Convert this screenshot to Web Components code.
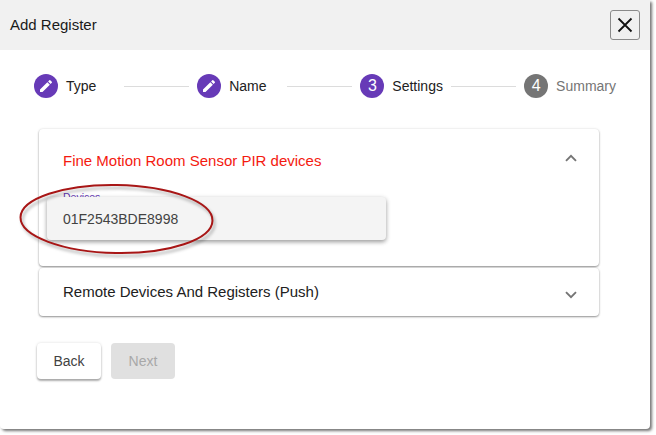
<!DOCTYPE html>
<html>
<head>
<meta charset="utf-8">
<title>Add Register</title>
<style>
  html, body { margin: 0; padding: 0; background: #fff; }
  body { font-family: "Liberation Sans", Arial, sans-serif; width: 656px; height: 435px; overflow: hidden; }
</style>
</head>
<body>
<reg-dialog heading="Add Register">
  <reg-stepper>
    <reg-step state="done" label="Type"></reg-step>
    <reg-step state="done" label="Name"></reg-step>
    <reg-step state="active" num="3" label="Settings"></reg-step>
    <reg-step state="todo" num="4" label="Summary" last></reg-step>
  </reg-stepper>
  <reg-panel heading="Fine Motion Room Sensor PIR devices" open>
    <reg-select label="Devices" value="01F2543BDE8998"></reg-select>
  </reg-panel>
  <reg-panel heading="Remote Devices And Registers (Push)"></reg-panel>
  <reg-actions>
    <reg-button>Back</reg-button>
    <reg-button disabled>Next</reg-button>
  </reg-actions>
  <reg-callout slot="over"></reg-callout>
</reg-dialog>

<script>
(function() {
  const dialogTpl = document.createElement('template');
  dialogTpl.innerHTML = `
    <style>
      :host {
        display: block;
        position: relative;
        width: 650px;
        height: 429px;
        background: #fff;
        border-radius: 0 0 4px 4px;
        box-shadow: 2px 2px 3px rgba(0,0,0,.55);
        color: #212121;
        font-size: 14px;
      }
      .head {
        height: 50px;
        background: #f1f1f1;
        display: flex;
        align-items: center;
        justify-content: space-between;
        padding: 0 10px;
        box-sizing: border-box;
      }
      .title { font-size: 15px; color: #1a1a1a; margin-bottom: 2px; }
      .close {
        width: 30px;
        height: 30px;
        box-sizing: border-box;
        border: 1px solid #8a8a8a;
        border-radius: 3px;
        background: #f0f0f0;
        padding: 0;
        display: flex;
        align-items: center;
        justify-content: center;
      }
      .body { padding: 24px 51px 0 39px; display: flex; flex-direction: column; }
    </style>
    <div class="head">
      <span class="title"></span>
      <button class="close" aria-label="Close">
        <svg width="16" height="16" viewBox="0 0 16 16"><path d="M1.5 1.5 L14.5 14.5 M14.5 1.5 L1.5 14.5" stroke="#111" stroke-width="1.8" fill="none"/></svg>
      </button>
    </div>
    <div class="body"><slot></slot></div>
    <slot name="over"></slot>
  `;
  class RegDialog extends HTMLElement {
    constructor() {
      super();
      this.attachShadow({ mode: 'open' });
      this.shadowRoot.appendChild(dialogTpl.content.cloneNode(true));
    }
    connectedCallback() {
      this.shadowRoot.querySelector('.title').textContent = this.getAttribute('heading');
    }
  }

  const stepperTpl = document.createElement('template');
  stepperTpl.innerHTML = `
    <style>
      :host {
        display: flex;
        align-items: center;
        height: 24px;
        margin: 0 -17px 31px -5px;
      }
    </style>
    <slot></slot>
  `;
  class RegStepper extends HTMLElement {
    constructor() {
      super();
      this.attachShadow({ mode: 'open' });
      this.shadowRoot.appendChild(stepperTpl.content.cloneNode(true));
    }
  }

  const stepTpl = document.createElement('template');
  stepTpl.innerHTML = `
    <style>
      :host { display: flex; align-items: center; flex: 1 1 auto; }
      :host([last]) { flex: 0 0 auto; }
      .dot {
        width: 24px;
        height: 24px;
        border-radius: 50%;
        background: #673ab7;
        color: #fff;
        font-size: 16px;
        display: flex;
        align-items: center;
        justify-content: center;
        flex: none;
      }
      :host([state="todo"]) .dot { background: #757575; }
      .label { margin-left: 8px; min-width: 50px; font-size: 14px; color: #212121; }
      :host([state="todo"]) .label { color: #757575; }
      .line { flex: 1; height: 1px; background: #dcdcdc; margin: 0 8px; }
      :host([last]) .line { display: none; }
    </style>
    <span class="dot"></span><span class="label"></span><span class="line"></span>
  `;
  class RegStep extends HTMLElement {
    constructor() {
      super();
      this.attachShadow({ mode: 'open' });
      this.shadowRoot.appendChild(stepTpl.content.cloneNode(true));
    }
    connectedCallback() {
      const dot = this.shadowRoot.querySelector('.dot');
      this.shadowRoot.querySelector('.label').textContent = this.getAttribute('label');
      if (this.getAttribute('state') === 'done') {
        dot.innerHTML = '<svg width="16" height="16" viewBox="0 0 24 24"><path fill="#fff" d="M3 17.25V21h3.75L17.81 9.94l-3.75-3.75L3 17.25zM20.71 7.04a1 1 0 0 0 0-1.41l-2.34-2.34a1 1 0 0 0-1.41 0l-1.83 1.83 3.75 3.75 1.83-1.83z"/></svg>';
      } else {
        dot.textContent = this.getAttribute('num');
      }
    }
  }

  const panelTpl = document.createElement('template');
  panelTpl.innerHTML = `
    <style>
      :host {
        display: block;
        background: #fff;
        border-radius: 4px;
        margin-bottom: 2px;
        box-shadow: 0 1px 2px rgba(0,0,0,.4), 0 0 3px rgba(0,0,0,.1);
      }
      .head {
        height: 48px;
        box-sizing: border-box;
        padding: 0 24px;
        display: flex;
        align-items: center;
        justify-content: space-between;
        font-size: 15px;
        color: #212121;
      }
      .text { margin-bottom: 2px; }
      :host([open]) .head { height: 64px; color: #f41a10; }
      .chev { width: 12px; height: 8px; margin-right: -2px; transform: translateY(3px); }
      :host([open]) .chev { transform: translateY(-3px) rotate(180deg); }
      .content { display: none; height: 73px; position: relative; }
      :host([open]) .content { display: block; }
    </style>
    <div class="head">
      <span class="text"></span>
      <svg class="chev" viewBox="0 0 12 8"><path d="M1 1.2 L6 6.2 L11 1.2" stroke="#757575" stroke-width="1.9" fill="none"/></svg>
    </div>
    <div class="content"><slot></slot></div>
  `;
  class RegPanel extends HTMLElement {
    constructor() {
      super();
      this.attachShadow({ mode: 'open' });
      this.shadowRoot.appendChild(panelTpl.content.cloneNode(true));
    }
    connectedCallback() {
      this.shadowRoot.querySelector('.text').textContent = this.getAttribute('heading');
    }
  }

  const selectTpl = document.createElement('template');
  selectTpl.innerHTML = `
    <style>
      :host { display: block; position: relative; padding: 0 24px; font-size: 10.5px; color: #673ab7; }
      .label { display: block; line-height: 12px; transform: translateY(-2px); }
      .popup {
        position: absolute;
        left: 8px;
        top: 4px;
        width: 339px;
        height: 43px;
        box-sizing: border-box;
        padding-left: 16px;
        display: flex;
        align-items: center;
        background: #f4f4f4;
        border-radius: 4px;
        color: #424242;
        font-size: 14px;
        box-shadow: 0 2px 4px rgba(0,0,0,.35), 0 1px 6px rgba(0,0,0,.08);
      }
    </style>
    <span class="label"></span>
    <div class="popup"></div>
  `;
  class RegSelect extends HTMLElement {
    constructor() {
      super();
      this.attachShadow({ mode: 'open' });
      this.shadowRoot.appendChild(selectTpl.content.cloneNode(true));
    }
    connectedCallback() {
      this.shadowRoot.querySelector('.label').textContent = this.getAttribute('label');
      this.shadowRoot.querySelector('.popup').textContent = this.getAttribute('value');
    }
  }

  const actionsTpl = document.createElement('template');
  actionsTpl.innerHTML = `
    <style>
      :host { display: flex; gap: 10px; margin: 25px 0 0 -2px; }
    </style>
    <slot></slot>
  `;
  class RegActions extends HTMLElement {
    constructor() {
      super();
      this.attachShadow({ mode: 'open' });
      this.shadowRoot.appendChild(actionsTpl.content.cloneNode(true));
    }
  }

  const buttonTpl = document.createElement('template');
  buttonTpl.innerHTML = `
    <style>
      :host {
        display: flex;
        align-items: center;
        justify-content: center;
        width: 64px;
        height: 36px;
        border-radius: 4px;
        background: #fff;
        color: #424242;
        font-size: 14px;
        box-shadow: 0 2px 2px rgba(0,0,0,.3), 0 0 3px rgba(0,0,0,.14);
      }
      :host([disabled]) { background: #e0e0e0; color: #a8a8a8; box-shadow: none; }
    </style>
    <slot></slot>
  `;
  class RegButton extends HTMLElement {
    constructor() {
      super();
      this.attachShadow({ mode: 'open' });
      this.shadowRoot.appendChild(buttonTpl.content.cloneNode(true));
    }
  }

  const calloutTpl = document.createElement('template');
  calloutTpl.innerHTML = `
    <style>
      :host { position: absolute; left: 16px; top: 180px; width: 204px; height: 80px; pointer-events: none; }
      svg { display: block; }
    </style>
    <svg width="204" height="80" viewBox="0 0 204 80">
      <defs><filter id="s" x="-10%" y="-20%" width="120%" height="140%"><feGaussianBlur stdDeviation="1.6"/></filter></defs>
      <ellipse cx="102.5" cy="42" rx="96" ry="34" transform="rotate(1 102 40)" fill="none" stroke="#000" stroke-opacity=".3" stroke-width="2" filter="url(#s)"/>
      <ellipse cx="100.5" cy="39" rx="96" ry="34" transform="rotate(1 100 39)" fill="none" stroke="#a81616" stroke-width="2"/>
    </svg>
  `;
  class RegCallout extends HTMLElement {
    constructor() {
      super();
      this.attachShadow({ mode: 'open' });
      this.shadowRoot.appendChild(calloutTpl.content.cloneNode(true));
    }
  }

  customElements.define('reg-dialog', RegDialog);
  customElements.define('reg-stepper', RegStepper);
  customElements.define('reg-step', RegStep);
  customElements.define('reg-panel', RegPanel);
  customElements.define('reg-select', RegSelect);
  customElements.define('reg-actions', RegActions);
  customElements.define('reg-button', RegButton);
  customElements.define('reg-callout', RegCallout);
})();
</script>
</body>
</html>
